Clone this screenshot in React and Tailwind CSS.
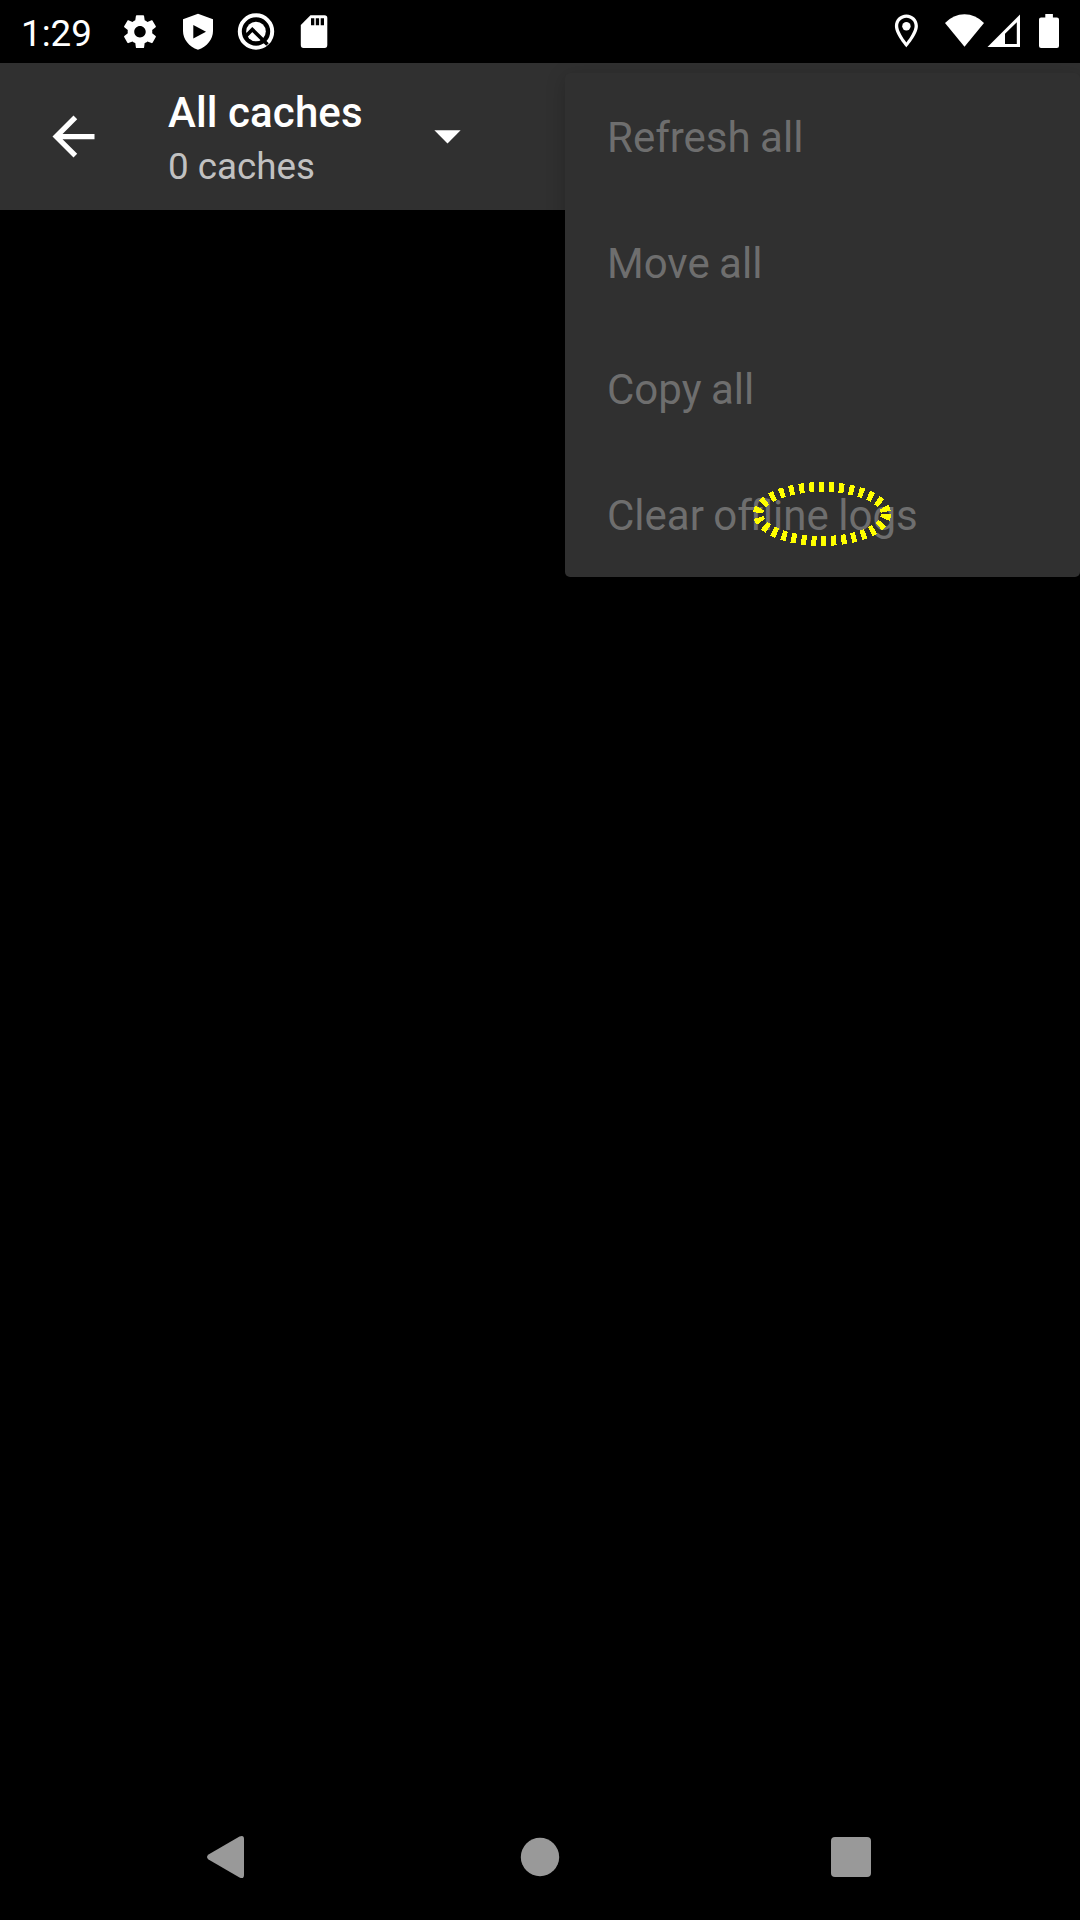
const MENU_ITEMS = ["Refresh all", "Move all", "Copy all", "Clear offline logs"];

function StatusBar() {
  return (
    <div className="flex h-[63px] items-center justify-between text-white">
      <div className="flex items-center">
        <span className="h-[63px] w-[111px] pt-[4px] pl-[21px] text-[36.75px] leading-[60px]">1:29</span>
        <svg width="58" height="63" viewBox="111 0 58 63" fill="currentColor">
          <path
            transform="translate(120.3 12) scale(1.64)"
            d="M19.43 12.98c.04-.32.07-.64.07-.98s-.03-.66-.07-.98l2.11-1.65c.19-.15.24-.42.12-.64l-2-3.46c-.12-.22-.39-.3-.61-.22l-2.49 1c-.52-.4-1.08-.73-1.69-.98l-.38-2.65C14.46 2.18 14.25 2 14 2h-4c-.25 0-.46.18-.49.42l-.38 2.65c-.61.25-1.17.59-1.69.98l-2.49-1c-.23-.09-.49 0-.61.22l-2 3.46c-.13.22-.07.49.12.64l2.11 1.65c-.04.32-.07.65-.07.98s.03.66.07.98l-2.11 1.65c-.19.15-.24.42-.12.64l2 3.46c.12.22.39.3.61.22l2.49-1c.52.4 1.08.73 1.69.98l.38 2.65c.03.24.24.42.49.42h4c.25 0 .46-.18.49-.42l.38-2.65c.61-.25 1.17-.59 1.69-.98l2.49 1c.23.09.49 0 .61-.22l2-3.46c.12-.22.07-.49-.12-.64l-2.11-1.65zM12 15.5c-1.93 0-3.5-1.57-3.5-3.5s1.57-3.5 3.5-3.5 3.5 1.57 3.5 3.5-1.57 3.5-3.5 3.5z"
          />
        </svg>
        <svg width="58" height="63" viewBox="169 0 58 63" fill="currentColor">
          <path
            fillRule="evenodd"
            d="M198 13.7L213 19.2V31C213 39.5 207 46.5 198 49.8C189 46.5 183 39.5 183 31V19.2ZM193.3 25V38.5L206 31.7Z"
          />
        </svg>
        <svg width="58" height="63" viewBox="227 0 58 63" fill="none" stroke="currentColor">
          <circle cx="256" cy="31.5" r="16.2" strokeWidth="4" />
          <circle cx="256" cy="31.5" r="9.8" fill="currentColor" stroke="none" />
          <path d="M246 36L252.3 29.5L267.5 44.5" stroke="#000" strokeWidth="3.6" />
        </svg>
        <svg width="58" height="63" viewBox="285 0 58 63">
          <path fill="currentColor" d="M310.5 15.2H324.5Q327.3 15.2 327.3 18V45Q327.3 48 324.5 48H303.5Q300.8 48 300.8 45V25Z" />
          <path d="M311 18.3h3.3v7H311zM315.8 18.3h3.3v7h-3.3zM320.7 18.3h3.3v7h-3.3z" />
        </svg>
      </div>
      <svg width="190" height="63" viewBox="890 0 190 63" fill="currentColor">
        <path
          fillRule="evenodd"
          d="M906.4 14.5C900 14.5 894.9 19.6 894.9 26C894.9 34.6 906.4 47.3 906.4 47.3S917.9 34.6 917.9 26C917.9 19.6 912.8 14.5 906.4 14.5ZM906.4 17.8C911 17.8 914.6 21.4 914.6 26C914.6 30.7 909.9 38 906.4 42.4C902.9 38 898.2 30.7 898.2 26C898.2 21.4 901.8 17.8 906.4 17.8Z"
        />
        <circle cx="906.4" cy="26.2" r="4.2" />
        <path d="M945 22.9Q953.5 14.2 964.5 14.2T984 22.9L964.5 46.8Z" />
        <path fillRule="evenodd" d="M1020 14.5V47H987.5ZM1016.8 22.2L1005 33.7V44H1016.8Z" />
        <path d="M1045.3 14h7.6v3.4h4q2.1 0 2.1 2.1V46q0 2-2.1 2h-15.8q-2.1 0-2.1-2V19.5q0-2.1 2.1-2.1h4.2z" />
      </svg>
    </div>
  );
}

function Toolbar() {
  return (
    <header className="flex h-[147px] items-center bg-[#303030] text-white">
      <svg className="ml-[42px] shrink-0" width="63" height="63" viewBox="0 0 24 24" fill="currentColor">
        <path d="M20 11H7.83l5.59-5.59L12 4l-8 8 8 8 1.41-1.41L7.83 13H20v-2z" />
      </svg>
      <div className="ml-[63px] w-[225px] pt-[4px]">
        <div className="text-[42px] leading-[53px] font-medium tracking-[0.1px]">All caches</div>
        <div className="pt-[3px] text-[36.75px] leading-[49px] text-[#c1c1c1]">0 caches</div>
      </div>
      <svg className="mb-[2px] ml-[23px] shrink-0" width="63" height="63" viewBox="0 0 24 24" fill="currentColor">
        <path d="M7 10l5 5 5-5z" />
      </svg>
    </header>
  );
}

function OverflowMenu() {
  return (
    <div className="absolute top-[73px] right-0 w-[515px] rounded-[5px] bg-[#303030] shadow-[0_4px_20px_rgba(0,0,0,0.2)]">
      {MENU_ITEMS.map((label) => (
        <div
          key={label}
          className="flex h-[126px] items-center pt-[3px] pl-[42px] text-[42px] [word-spacing:-1px] text-[#6e6e6e]"
        >
          {label}
        </div>
      ))}
      <svg
        className="absolute top-[403px] left-[182px]"
        width="150"
        height="76"
        fill="none"
        stroke="#ffff00"
        shapeRendering="crispEdges"
      >
        <ellipse cx="75" cy="38" rx="64" ry="27" strokeWidth="10" strokeDasharray="5 5" />
      </svg>
    </div>
  );
}

function NavBar() {
  return (
    <nav className="flex h-[126px] text-[#999999]">
      <svg width="1080" height="126" viewBox="0 1794 1080 126" fill="currentColor">
        <path d="M239.5 1836.5Q244 1834.5 244 1839V1875Q244 1879.5 239.5 1877.5L208.5 1859.5Q205.5 1857 208.5 1854.5Z" />
        <circle cx="540" cy="1857" r="19.2" />
        <rect x="831" y="1837" width="40" height="40" rx="4" />
      </svg>
    </nav>
  );
}

export default function App() {
  return (
    <div className="relative flex h-[1920px] w-[1080px] flex-col overflow-hidden bg-black font-[Roboto,sans-serif]">
      <StatusBar />
      <Toolbar />
      <main className="flex-1" />
      <NavBar />
      <OverflowMenu />
    </div>
  );
}
